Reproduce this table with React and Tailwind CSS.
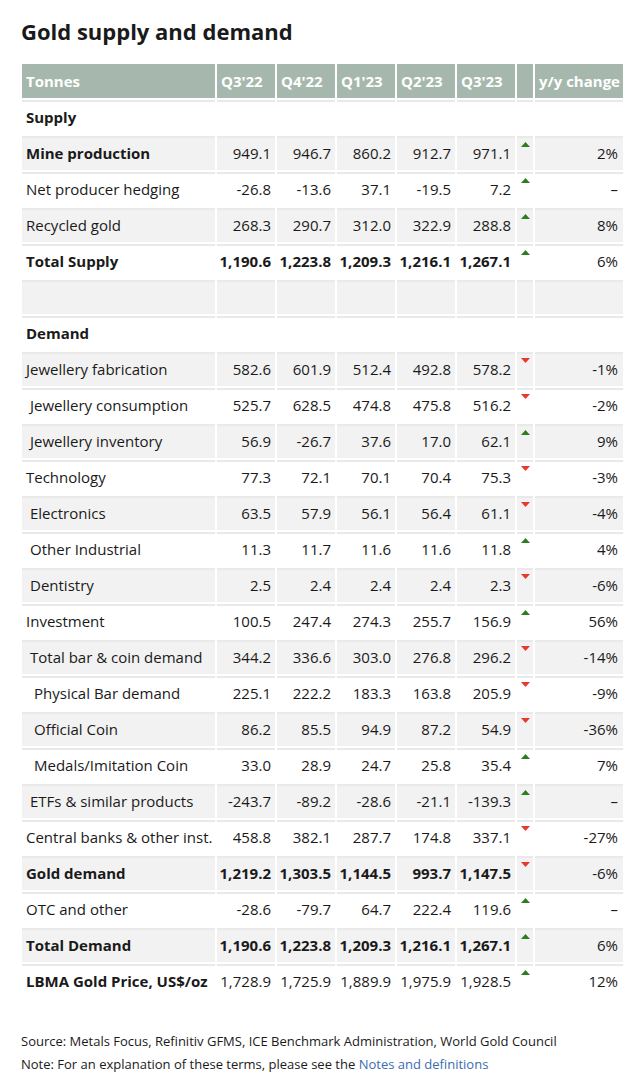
import React from 'react';

const rows = [
  { label: 'Supply', section: true },
  { label: 'Mine production', bold: true, vals: ['949.1', '946.7', '860.2', '912.7', '971.1'], dir: 'up', yy: '2%' },
  { label: 'Net producer hedging', vals: ['-26.8', '-13.6', '37.1', '-19.5', '7.2'], dir: 'up', yy: '–' },
  { label: 'Recycled gold', vals: ['268.3', '290.7', '312.0', '322.9', '288.8'], dir: 'up', yy: '8%' },
  { label: 'Total Supply', bold: true, boldVals: true, vals: ['1,190.6', '1,223.8', '1,209.3', '1,216.1', '1,267.1'], dir: 'up', yy: '6%' },
  { label: '' },
  { label: 'Demand', section: true },
  { label: 'Jewellery fabrication', vals: ['582.6', '601.9', '512.4', '492.8', '578.2'], dir: 'down', yy: '-1%' },
  { label: 'Jewellery consumption', indent: 1, vals: ['525.7', '628.5', '474.8', '475.8', '516.2'], dir: 'down', yy: '-2%' },
  { label: 'Jewellery inventory', indent: 1, vals: ['56.9', '-26.7', '37.6', '17.0', '62.1'], dir: 'up', yy: '9%' },
  { label: 'Technology', vals: ['77.3', '72.1', '70.1', '70.4', '75.3'], dir: 'down', yy: '-3%' },
  { label: 'Electronics', indent: 1, vals: ['63.5', '57.9', '56.1', '56.4', '61.1'], dir: 'down', yy: '-4%' },
  { label: 'Other Industrial', indent: 1, vals: ['11.3', '11.7', '11.6', '11.6', '11.8'], dir: 'up', yy: '4%' },
  { label: 'Dentistry', indent: 1, vals: ['2.5', '2.4', '2.4', '2.4', '2.3'], dir: 'down', yy: '-6%' },
  { label: 'Investment', vals: ['100.5', '247.4', '274.3', '255.7', '156.9'], dir: 'up', yy: '56%' },
  { label: 'Total bar & coin demand', indent: 1, vals: ['344.2', '336.6', '303.0', '276.8', '296.2'], dir: 'down', yy: '-14%' },
  { label: 'Physical Bar demand', indent: 2, vals: ['225.1', '222.2', '183.3', '163.8', '205.9'], dir: 'down', yy: '-9%' },
  { label: 'Official Coin', indent: 2, vals: ['86.2', '85.5', '94.9', '87.2', '54.9'], dir: 'down', yy: '-36%' },
  { label: 'Medals/Imitation Coin', indent: 2, vals: ['33.0', '28.9', '24.7', '25.8', '35.4'], dir: 'up', yy: '7%' },
  { label: 'ETFs & similar products', indent: 1, vals: ['-243.7', '-89.2', '-28.6', '-21.1', '-139.3'], dir: 'up', yy: '–' },
  { label: 'Central banks & other inst.', vals: ['458.8', '382.1', '287.7', '174.8', '337.1'], dir: 'down', yy: '-27%' },
  { label: 'Gold demand', bold: true, boldVals: true, vals: ['1,219.2', '1,303.5', '1,144.5', '993.7', '1,147.5'], dir: 'down', yy: '-6%' },
  { label: 'OTC and other', vals: ['-28.6', '-79.7', '64.7', '222.4', '119.6'], dir: 'up', yy: '–' },
  { label: 'Total Demand', bold: true, boldVals: true, vals: ['1,190.6', '1,223.8', '1,209.3', '1,216.1', '1,267.1'], dir: 'up', yy: '6%' },
  { label: 'LBMA Gold Price, US$/oz', bold: true, vals: ['1,728.9', '1,725.9', '1,889.9', '1,975.9', '1,928.5'], dir: 'up', yy: '12%' },
];

const cols = 'grid grid-cols-[193px_repeat(5,58px)_16px_88px] gap-x-[2px]';

const Arrow = ({ dir }) => {
  if (!dir) return null;
  return dir === 'up' ? (
    <svg width="9" height="5" viewBox="0 0 9 5" className="mx-auto mt-[4px]">
      <polygon points="4.5,0 9,5 0,5" fill="#2f7d1f" />
    </svg>
  ) : (
    <svg width="9" height="5" viewBox="0 0 9 5" className="mx-auto mt-[4px]">
      <polygon points="0,0 9,0 4.5,5" fill="#e8392b" />
    </svg>
  );
};

const indentCls = ['pl-[4px]', 'pl-[8px]', 'pl-[12px]'];

export default function App() {
  return (
    <div className="bg-white min-h-screen text-[#1a1a1a] px-[21px] pt-[16px]" style={{ fontFamily: '"Open Sans", "Noto Sans", sans-serif' }}>
      <h1 className="text-[22px] font-bold leading-[30px] mb-[18px]">Gold supply and demand</h1>

      <div className="flex flex-col gap-y-[2px] ml-[1px] text-[15px]">
        {/* header */}
        <div className={cols}>
          {['Tonnes', "Q3'22", "Q4'22", "Q1'23", "Q2'23", "Q3'23", '', 'y/y change'].map((h, i) => (
            <div key={i} className="h-[34px] bg-[#a6b8ad] text-white font-bold flex items-center px-[4px] whitespace-nowrap overflow-hidden">
              {h}
            </div>
          ))}
        </div>

        {rows.map((r, i) => {
          const bg = i % 2 === 1 ? 'bg-[#f2f2f2]' : 'bg-white';
          const cell = `h-[34px] border-t-2 border-[#e9e9e9] ${bg} flex items-center pb-[2px]`;
          return (
            <div key={i} className={cols}>
              <div className={`${cell} ${indentCls[r.indent || 0]} ${r.bold || r.section ? 'font-bold' : ''}`}>
                <span className="whitespace-nowrap">{r.label}</span>
              </div>
              {[0, 1, 2, 3, 4].map((j) => (
                <div key={j} className={`${cell} justify-end pr-[4px] ${r.boldVals ? 'font-bold' : ''}`}>
                  {r.vals ? r.vals[j] : ''}
                </div>
              ))}
              <div className={`h-[34px] border-t-2 border-[#e9e9e9] ${bg}`}>
                <Arrow dir={r.dir} />
              </div>
              <div className={`${cell} justify-end pr-[5px]`}>{r.yy || ''}</div>
            </div>
          );
        })}
      </div>

      <div className="mt-[32px] text-[13px] leading-[23px]">
        <p>Source: Metals Focus, Refinitiv GFMS, ICE Benchmark Administration, World Gold Council</p>
        <p>
          Note: For an explanation of these terms, please see the{' '}
          <a href="#" className="text-[#3c6db0]">Notes and definitions</a>
        </p>
      </div>
    </div>
  );
}
